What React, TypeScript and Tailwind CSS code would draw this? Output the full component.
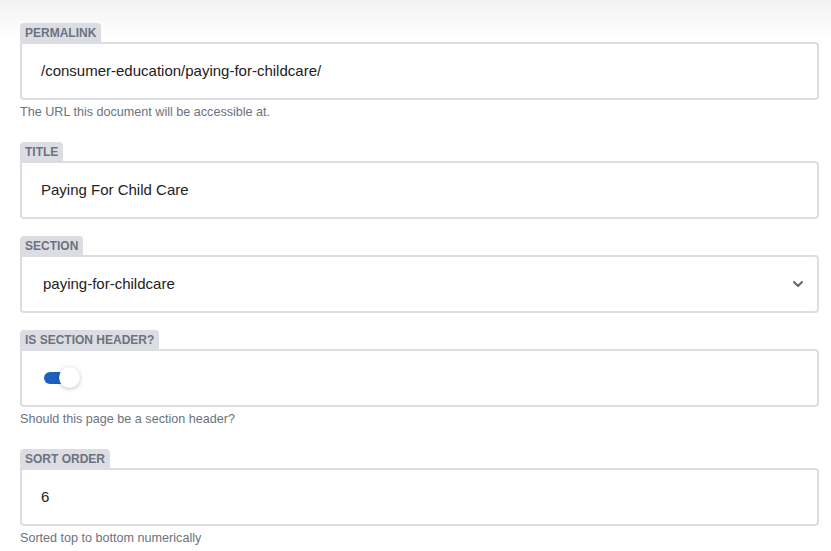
import { useState } from "react";

function Field({
  label,
  help,
  children,
}: {
  label: string;
  help?: string;
  children: React.ReactNode;
}) {
  return (
    <div className="mb-[17px]">
      <div className="flex">
        <div className="h-[19px] rounded-t-[4px] bg-[#dcdde2] px-[5px] text-[12px] font-bold uppercase leading-[20px] text-[#6c7280]">
          {label}
        </div>
      </div>
      <div className="flex h-[58px] items-center rounded-[4px] rounded-tl-none border-2 border-[#dcdde2] bg-white">
        {children}
      </div>
      {help && (
        <p className="pt-[4px] pb-[5px] text-[12.6px] leading-4 text-[#6c7280]">{help}</p>
      )}
    </div>
  );
}

export default function App() {
  const [on, setOn] = useState(true);

  return (
    <div
      className="min-h-[551px] bg-[linear-gradient(to_bottom,#f2f2f2,#ffffff_38px)] pt-[23px] pr-3 pl-5 text-[#222]"
      style={{ fontFamily: '"Liberation Sans", Arial, sans-serif' }}
    >
      <Field label="Permalink" help="The URL this document will be accessible at.">
        <span className="pl-[19px] text-[15px]">/consumer-education/paying-for-childcare/</span>
      </Field>

      <Field label="Title">
        <span className="pl-[19px] text-[15px]">Paying For Child Care</span>
      </Field>

      <Field label="Section">
        <div className="flex w-full items-center justify-between pr-[13px] pl-[21px]">
          <span className="text-[15px]">paying-for-childcare</span>
          <svg viewBox="0 0 12 8" className="h-[8px] w-[12px] text-[#5f6675]" fill="none">
            <path d="M2 2l4 4 4-4" stroke="currentColor" strokeWidth="2" strokeLinecap="round" strokeLinejoin="round" />
          </svg>
        </div>
      </Field>

      <Field label="Is section header?" help="Should this page be a section header?">
        <button
          onClick={() => setOn(!on)}
          className="relative ml-[21px] h-[22px] w-[40px]"
        >
          <span
            className={`absolute top-[5px] left-[1px] h-[12px] w-[34px] rounded-full ${on ? "bg-[#1f5fbf]" : "bg-[#c9cbd1]"}`}
          />
          <span
            className={`absolute top-0 h-[21px] w-[21px] rounded-full bg-white shadow-[0_1px_4px_rgba(0,0,0,0.25)] ${on ? "left-[16px]" : "left-0"}`}
          />
        </button>
      </Field>

      <Field label="Sort order" help="Sorted top to bottom numerically">
        <span className="pl-[19px] text-[15px]">6</span>
      </Field>
    </div>
  );
}
